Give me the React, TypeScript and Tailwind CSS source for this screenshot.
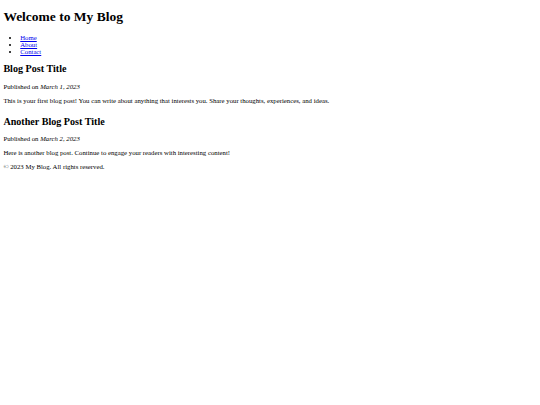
export default function App() {
  const posts = [
    {
      title: "Blog Post Title",
      date: "March 1, 2023",
      body: "This is your first blog post! You can write about anything that interests you. Share your thoughts, experiences, and ideas.",
    },
    {
      title: "Another Blog Post Title",
      date: "March 2, 2023",
      body: "Here is another blog post. Continue to engage your readers with interesting content!",
    },
  ];

  return (
    <div className="min-h-[405px] bg-white px-[3.375px] text-[6.75px] leading-[normal] text-black font-['Liberation_Serif',serif]">
      <header>
        <h1 className="my-[9.045px] text-[13.5px] font-bold">Welcome to My Blog</h1>
        <nav>
          <ul className="my-[6.75px] list-disc pl-[16.875px]">
            <li>
              <a href="#" className="text-[#0000ee] underline">Home</a>
            </li>
            <li>
              <a href="#" className="text-[#0000ee] underline">About</a>
            </li>
            <li>
              <a href="#" className="text-[#0000ee] underline">Contact</a>
            </li>
          </ul>
        </nav>
      </header>

      <main className="space-y-[12.4px]">
        {posts.map((post) => (
          <article key={post.title}>
            <h2 className="my-[8.4px] text-[10.125px] font-bold">{post.title}</h2>
            <p className="my-[6.75px]">
              Published on <em className="italic">{post.date}</em>
            </p>
            <p className="my-[6.75px]">{post.body}</p>
          </article>
        ))}
      </main>

      <footer>
        <p className="my-[6.75px]">© 2023 My Blog. All rights reserved.</p>
      </footer>
    </div>
  );
}
